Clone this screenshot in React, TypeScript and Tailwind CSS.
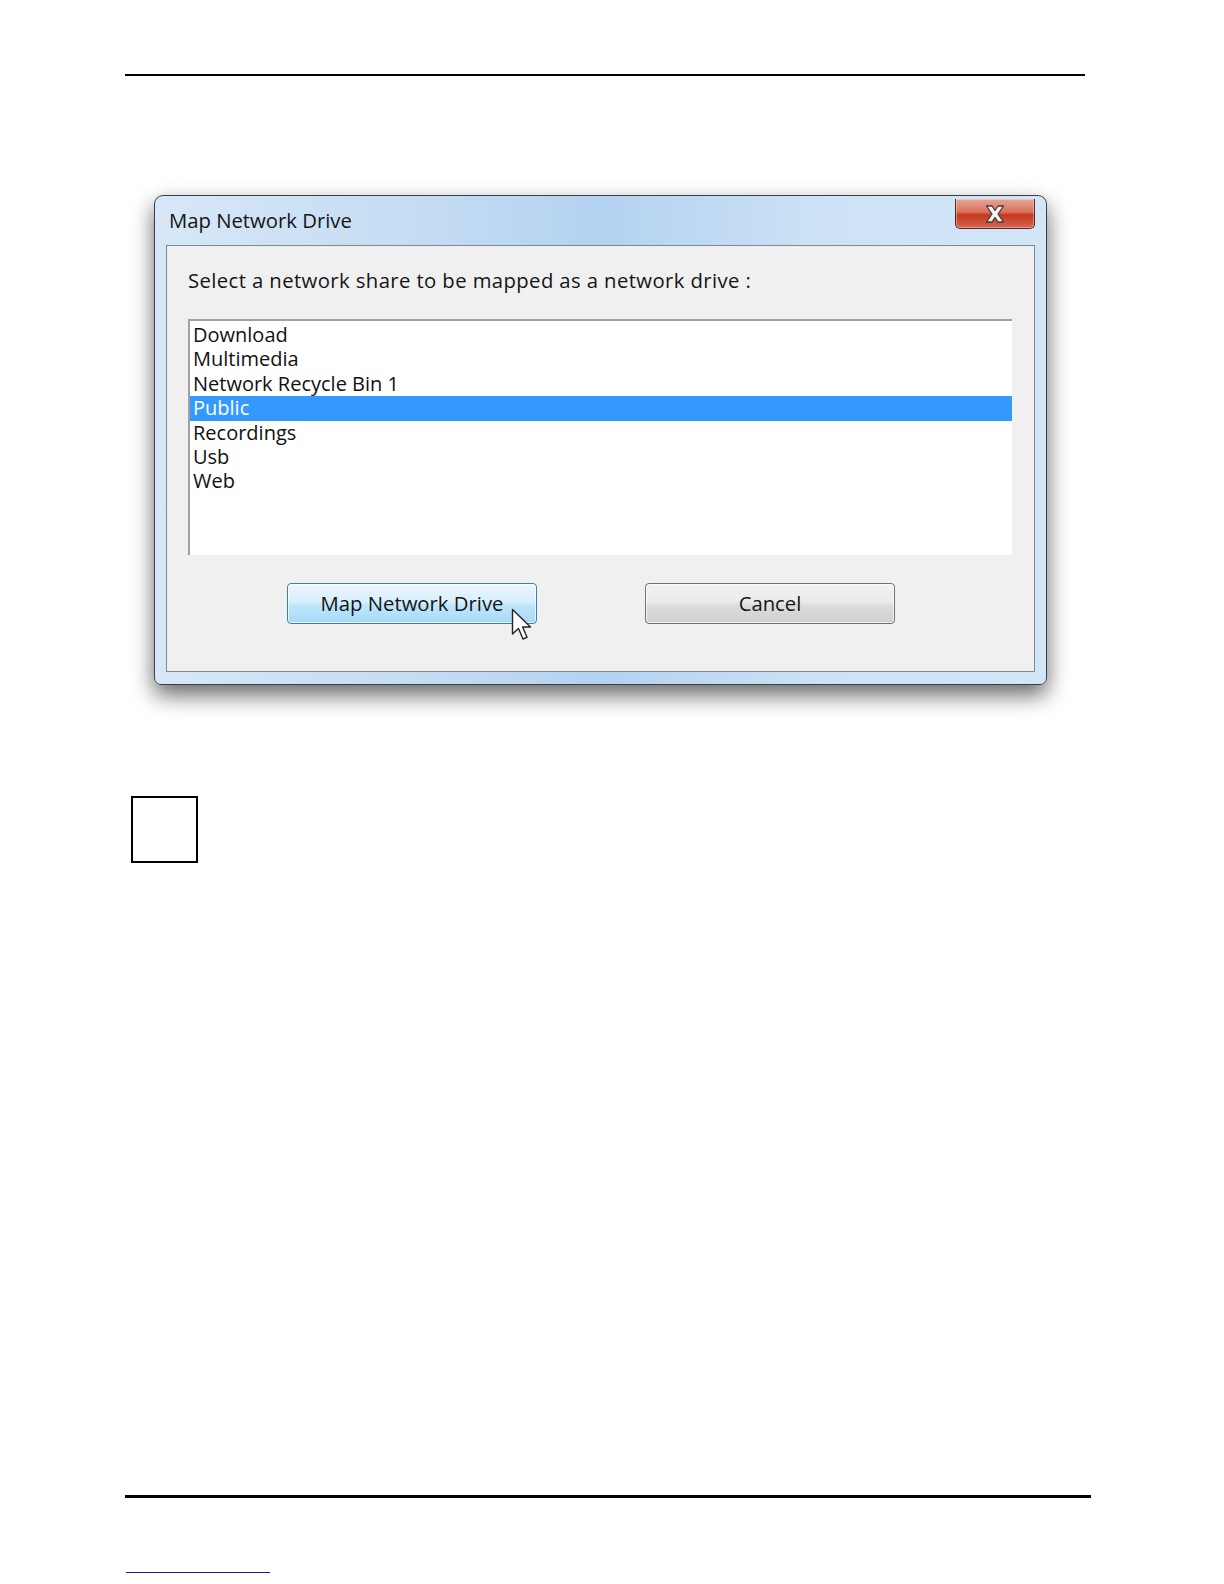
const shares = ["Download", "Multimedia", "Network Recycle Bin 1", "Public", "Recordings", "Usb", "Web"];

function CloseButton() {
  return (
    <div className="absolute right-[11px] top-[3px] flex h-[30px] w-[80px] items-center justify-center rounded-b-[5px] border border-t-0 border-[#5a2a22] bg-[linear-gradient(to_bottom,#e8a595_0%,#d9705c_45%,#c4381f_55%,#d8664f_100%)] shadow-[inset_0_0_0_1px_rgba(255,255,255,0.35)]">
      <svg width="24" height="20" viewBox="0 0 24 20">
        <path
          d="M3.5 2 L9 2 L12 6.5 L15 2 L20.5 2 L15 10 L20.5 18 L15 18 L12 13.5 L9 18 L3.5 18 L9 10 Z"
          fill="#f4f4f4"
          stroke="#4a3a36"
          strokeWidth="1.3"
          strokeLinejoin="round"
        />
      </svg>
    </div>
  );
}

function Cursor() {
  return (
    <svg className="absolute left-[223px] top-[24px]" width="24" height="36" viewBox="0 0 24 36">
      <path
        d="M1.5 1.5 L1.5 26 L7.5 20.5 L12 31 L16 29.3 L11.6 19 L19.5 19 Z"
        fill="#ffffff"
        stroke="#222222"
        strokeWidth="1.4"
        strokeLinejoin="round"
      />
    </svg>
  );
}

function MapDriveDialog() {
  return (
    <div className="relative ml-[154px] mt-[119px] flex h-[490px] w-[893px] flex-col rounded-t-[9px] rounded-b-[7px] border border-[#3b3f45] bg-[linear-gradient(to_right,#d7e7f7_0%,#c5dcf3_30%,#b3d2f0_50%,#cde2f6_75%,#d3e6f8_100%)] px-[11px] pb-[12px] shadow-[0_10px_22px_rgba(0,0,0,0.6)]">
      <div className="flex h-[49px] shrink-0 items-center pl-[3px] text-[20.3px] text-[#151515]">
        Map Network Drive
      </div>
      <CloseButton />
      <div className="flex flex-1 flex-col border border-[#7d8894] bg-[#f0f0f0] px-[21px]">
        <div className="mt-[19px] text-[20.3px] leading-[30px] tracking-[0.4px] text-[#151515]">
          Select a network share to be mapped as a network drive :
        </div>
        <div className="mt-[24px] mr-[1px] h-[236px] border-l-[2px] border-t-[2px] border-l-[#a0a0a0] border-t-[#a0a0a0] bg-white pt-[2px]">
          {shares.map((s) => (
            <div
              key={s}
              className={
                s === "Public"
                  ? "h-[24.4px] bg-[#3399ff] pl-[3px] text-[20px] leading-[24px] text-white"
                  : "h-[24.4px] pl-[3px] text-[20px] leading-[24px] text-[#111]"
              }
            >
              {s}
            </div>
          ))}
        </div>
        <div className="mt-[28px] flex gap-[108px] pl-[99px]">
          <div className="relative flex h-[41px] w-[250px] items-center justify-center rounded-[4px] border border-[#3c7fb1] bg-[linear-gradient(to_bottom,#eaf6fd_0%,#d9f0fc_45%,#bee6fd_55%,#a7d9f5_100%)] text-[20.3px] text-[#151515] shadow-[inset_0_0_0_1px_rgba(255,255,255,0.7)]">
            Map Network Drive
            <Cursor />
          </div>
          <div className="flex h-[41px] w-[250px] items-center justify-center rounded-[4px] border border-[#707070] bg-[linear-gradient(to_bottom,#f2f2f2_0%,#ebebeb_45%,#dddddd_55%,#cfcfcf_100%)] text-[20.3px] text-[#151515] shadow-[inset_0_0_0_1px_rgba(255,255,255,0.7)]">
            Cancel
          </div>
        </div>
      </div>
    </div>
  );
}

export default function App() {
  return (
    <div className="flex h-[1584px] w-[1224px] flex-col bg-white font-['Open_Sans','Noto_Sans',sans-serif]">
      <div className="ml-[125px] mt-[74px] h-[2px] w-[960px] bg-black" />
      <MapDriveDialog />
      <div className="ml-[131px] mt-[111px] h-[67px] w-[67px] border-2 border-black" />
      <div className="ml-[125px] mt-[632px] h-[3px] w-[966px] bg-black" />
      <div className="ml-[126px] mt-[74px] h-[1px] w-[144px] bg-[#1a1a8c]" />
    </div>
  );
}
